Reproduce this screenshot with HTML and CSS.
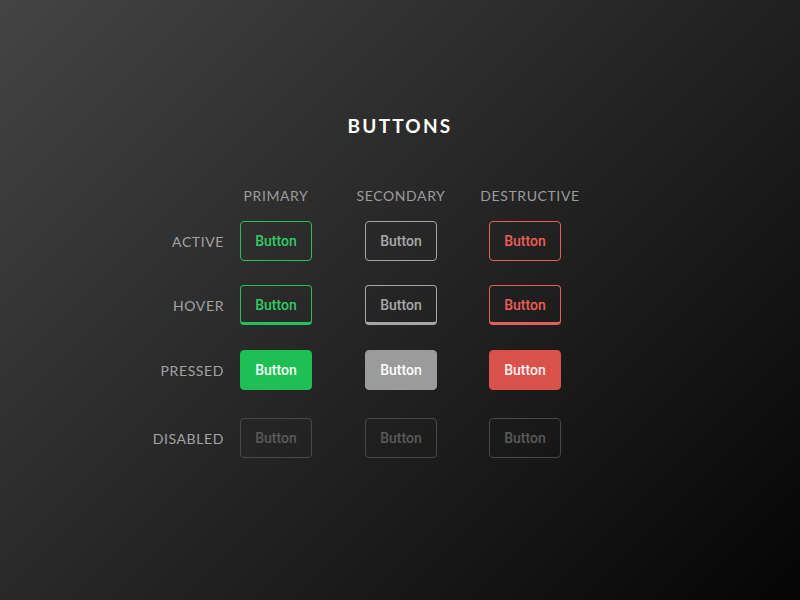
FILE: index.html
```html
<!DOCTYPE html>
<html>
<head>
<meta charset="utf-8">
<link rel="stylesheet" href="styles.css">
</head>
<body>
<main class="page">
  <h1 class="title">BUTTONS</h1>
  <div class="table">
    <div class="row head">
      <span class="label"></span>
      <span class="col-title">PRIMARY</span>
      <span class="col-title">SECONDARY</span>
      <span class="col-title dest">DESTRUCTIVE</span>
    </div>
    <div class="row r-active">
      <span class="label">ACTIVE</span>
      <button class="btn primary">Button</button>
      <button class="btn secondary">Button</button>
      <button class="btn destructive">Button</button>
    </div>
    <div class="row r-hover">
      <span class="label">HOVER</span>
      <button class="btn primary hover">Button</button>
      <button class="btn secondary hover">Button</button>
      <button class="btn destructive hover">Button</button>
    </div>
    <div class="row r-pressed">
      <span class="label">PRESSED</span>
      <button class="btn primary pressed">Button</button>
      <button class="btn secondary pressed">Button</button>
      <button class="btn destructive pressed">Button</button>
    </div>
    <div class="row r-disabled">
      <span class="label">DISABLED</span>
      <button class="btn disabled">Button</button>
      <button class="btn disabled">Button</button>
      <button class="btn disabled">Button</button>
    </div>
  </div>
</main>
</body>
</html>
```
FILE: styles.css
```css
html, body {
  margin: 0;
  padding: 0;
  width: 800px;
  height: 600px;
  overflow: hidden;
}
body {
  background: linear-gradient(135deg, #444444 0%, #2c2c2c 38%, #1d1d1d 62%, #050505 100%);
  font-family: Lato, "Open Sans", sans-serif;
}
.page {
  padding-top: 113px;
}
.title {
  margin: 0;
  text-align: center;
  color: #ffffff;
  font-family: Lato, sans-serif;
  font-weight: 700;
  font-size: 19px;
  letter-spacing: 2.2px;
  line-height: 26px;
}
.table {
  margin-top: 44px;
  padding-left: 134px;
}
.row {
  display: grid;
  grid-template-columns: 90px 16px 72px 53px 72px 52px 72px;
  align-items: center;
  height: 40px;
}
.row > :nth-child(1) { grid-column: 1; }
.row > :nth-child(2) { grid-column: 3; }
.row > :nth-child(3) { grid-column: 5; }
.row > :nth-child(4) { grid-column: 7; }
.head { height: 24px; }
.r-active { margin-top: 14px; }
.r-hover { margin-top: 24px; }
.r-pressed { margin-top: 25px; }
.r-disabled { margin-top: 28px; }
.label {
  text-align: right;
  color: #a3a3a3;
  font-size: 14px;
  letter-spacing: 0.6px;
  font-weight: 400;
}
.col-title {
  justify-self: center;
  white-space: nowrap;
  color: #9c9c9c;
  font-size: 14px;
  letter-spacing: 0.6px;
}
.col-title.dest { transform: translateX(5px); }
.btn {
  box-sizing: border-box;
  width: 72px;
  height: 40px;
  padding: 0;
  background: transparent;
  border: 1px solid;
  border-radius: 4px;
  font-family: Roboto, sans-serif;
  font-weight: 500;
  font-size: 14px;
}
.primary { border-color: #24c15b; color: #2ecc65; }
.secondary { border-color: #a6a6a6; color: #a8a8a8; }
.destructive { border-color: #e0615a; color: #ef5e57; }
.hover { border-bottom-width: 3px; padding-top: 2px; }
.primary.pressed { background: #1fbf55; border-color: #1fbf55; color: #f4fff7; }
.secondary.pressed { background: #9b9b9b; border-color: #9b9b9b; color: #ffffff; }
.destructive.pressed { background: #d9514b; border-color: #d9514b; color: #fff2f1; }
.disabled { border-color: #484848; color: #5a5a5a; }
```
